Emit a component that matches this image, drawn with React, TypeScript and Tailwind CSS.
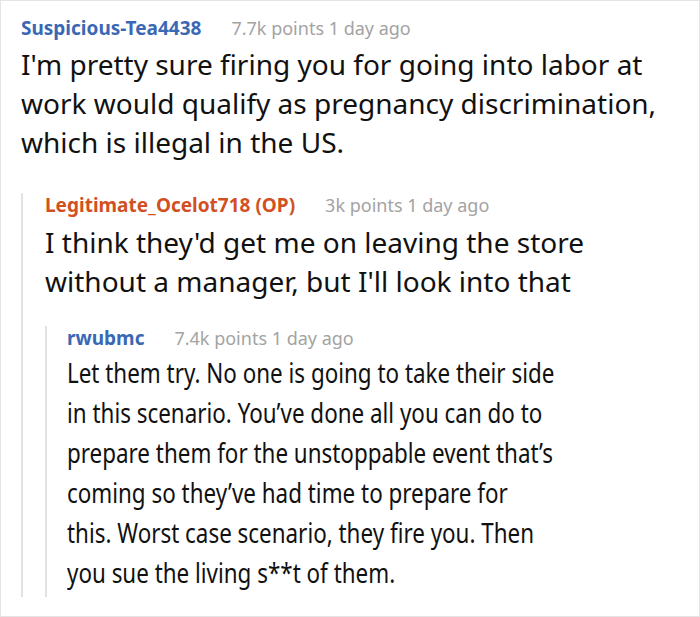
const FONT = "font-['Noto_Sans',sans-serif]"

type Comment = {
  user: string
  userColor: string
  points: string
  lines: string[]
}

const TOP: Comment = {
  user: "Suspicious-Tea4438",
  userColor: "text-[#3a68b4]",
  points: "7.7k points 1 day ago",
  lines: [
    "I'm pretty sure firing you for going into labor at",
    "work would qualify as pregnancy discrimination,",
    "which is illegal in the US.",
  ],
}

const OP_REPLY: Comment = {
  user: "Legitimate_Ocelot718 (OP)",
  userColor: "text-[#d2501f]",
  points: "3k points 1 day ago",
  lines: [
    "I think they'd get me on leaving the store",
    "without a manager, but I'll look into that",
  ],
}

const LAST_REPLY: Comment = {
  user: "rwubmc",
  userColor: "text-[#3a68b4]",
  points: "7.4k points 1 day ago",
  lines: [
    "Let them try. No one is going to take their side",
    "in this scenario. You\u2019ve done all you can do to",
    "prepare them for the unstoppable event that\u2019s",
    "coming so they\u2019ve had time to prepare for",
    "this. Worst case scenario, they fire you. Then",
    "you sue the living s**t of them.",
  ],
}

function Header({ c }: { c: Comment }) {
  return (
    <div className="flex items-baseline gap-[30px] leading-[24px]">
      <span className={`text-[19px] font-bold ${c.userColor}`}>{c.user}</span>
      <span className="text-[18px] text-[#a3a3a3]">{c.points}</span>
    </div>
  )
}

export default function App() {
  return (
    <div className={`h-[617px] w-[700px] overflow-hidden border border-[#e4e4e4] bg-white pl-[20px] pt-[15px] ${FONT}`}>
      <Header c={TOP} />
      <p className="mt-[5px] whitespace-nowrap text-[28px] leading-[39px] text-[#111]">
        {TOP.lines.map((l) => (
          <span key={l} className="block">{l}</span>
        ))}
      </p>

      {/* reply thread */}
      <div className="mt-[31px] border-l-2 border-[#e2e2e2] pl-[22px]">
        <Header c={OP_REPLY} />
        <p className="mt-[6px] whitespace-nowrap text-[28px] leading-[39px] text-[#111]">
          {OP_REPLY.lines.map((l) => (
            <span key={l} className="block">{l}</span>
          ))}
        </p>

        <div className="mt-[25px] border-l-2 border-[#e2e2e2] pl-[20px]">
          <Header c={LAST_REPLY} />
          <p className="mt-[2px] origin-left scale-x-[0.8] whitespace-nowrap pb-[5px] text-[28px] leading-[40px] text-[#111]">
            {LAST_REPLY.lines.map((l) => (
              <span key={l} className="block">{l}</span>
            ))}
          </p>
        </div>
      </div>
    </div>
  )
}
